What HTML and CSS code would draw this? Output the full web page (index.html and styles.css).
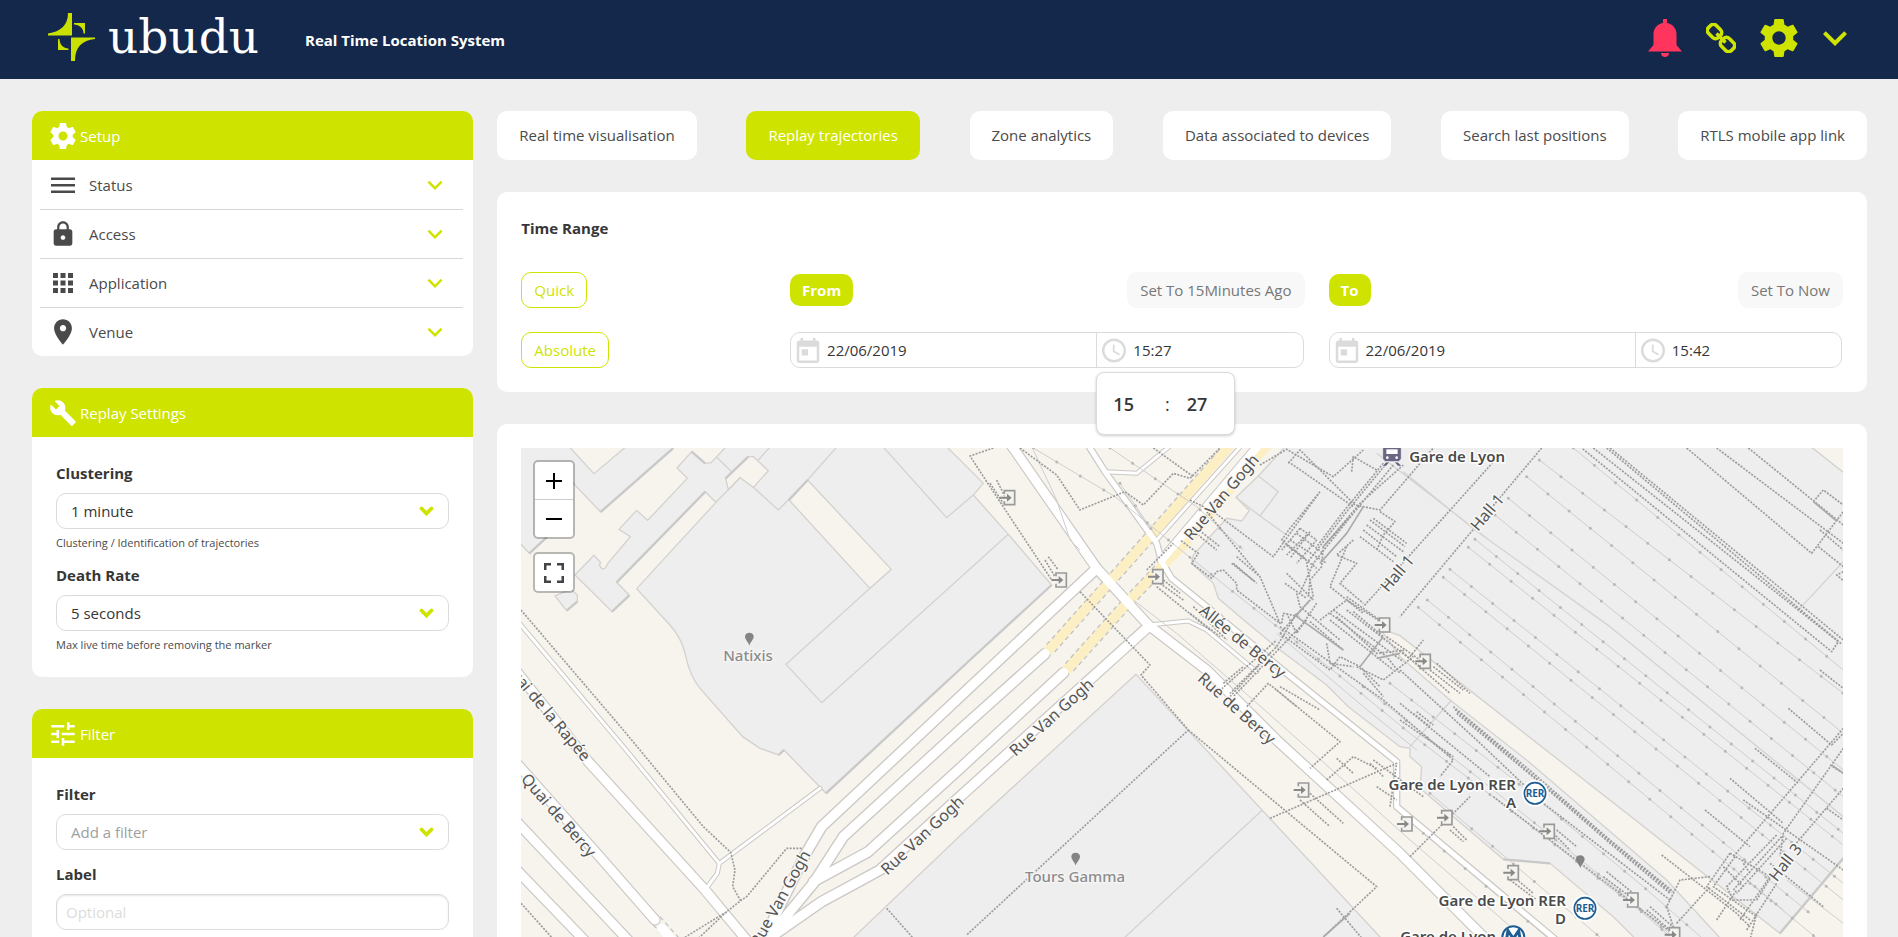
FILE: index.html
```html
<!DOCTYPE html>
<html lang="en">
<head>
<meta charset="utf-8">
<title>Ubudu - Real Time Location System</title>
<link rel="stylesheet" href="styles.css">
</head>
<body>
<svg class="defs" aria-hidden="true">
  <symbol id="i-gear" viewBox="2 2 20 20"><path d="M19.43 12.98c.04-.32.07-.64.07-.98s-.03-.66-.07-.98l2.11-1.65c.19-.15.24-.42.12-.64l-2-3.46c-.12-.22-.39-.3-.61-.22l-2.49 1c-.52-.4-1.08-.73-1.69-.98l-.38-2.65C14.46 2.18 14.25 2 14 2h-4c-.25 0-.46.18-.49.42l-.38 2.65c-.61.25-1.17.59-1.69.98l-2.49-1c-.23-.09-.49 0-.61.22l-2 3.46c-.13.22-.07.49.12.64l2.11 1.65c-.04.32-.07.65-.07.98s.03.66.07.98l-2.11 1.65c-.19.15-.24.42-.12.64l2 3.46c.12.22.39.3.61.22l2.49-1c.52.4 1.08.73 1.69.98l.38 2.65c.03.24.24.42.49.42h4c.25 0 .46-.18.49-.42l.38-2.65c.61-.25 1.17-.59 1.69-.98l2.49 1c.23.09.49 0 .61-.22l2-3.46c.12-.22.07-.49-.12-.64l-2.11-1.65zM12 15.500c-1.930 0-3.500-1.570-3.500-3.500s1.570-3.500 3.500-3.500 3.500 1.570 3.500 3.500-1.570 3.500-3.500 3.500z"/></symbol>
  <symbol id="i-chev" viewBox="6 8 12 8"><path d="M7.410 8.590 12 13.170l4.590-4.580L18 10l-6 6-6-6z"/></symbol>
  <symbol id="i-cal" viewBox="3 1 18 20"><path d="M19 3h-1V1h-2v2H8V1H6v2H5c-1.110 0-1.990.9-1.990 2L3 19c0 1.100.89 2 2 2h14c1.100 0 2-.9 2-2V5c0-1.100-.9-2-2-2zm0 16H5V8h14v11zM7 10h5v5H7z"/></symbol>
  <symbol id="i-clock" viewBox="2 2 20 20"><path d="M12 2a10 10 0 1 0 0 20 10 10 0 0 0 0-20zm0 18a8 8 0 1 1 0-16 8 8 0 0 1 0 16zm.5-13H11v6l5.200 3.200.8-1.300-4.500-2.700z"/></symbol>
  <symbol id="m-door" viewBox="-28 -26 56 52" overflow="visible"><path d="M-12-11V-21H19V21H-12V11" fill="#f4f2ee" stroke="#999" stroke-width="5"/><path d="M-26-3H-4V-12L10 0-4 12V3H-26z" fill="#888"/></symbol>
  <symbol id="m-pin" viewBox="-14 -20 28 40" overflow="visible"><path d="M0 20C-3 8-13 2-13-7A13 12 0 0 1 13-7C13 2 3 8 0 20z" fill="#848484"/></symbol>
</svg>
<div class="app">
  <header class="topbar">
    <a class="brand" href="#">
      <svg class="brand-mark" viewBox="0 0 48 48"><g fill="#c9e000"><path d="M20 0H24V22.500H0V20.500C13 18.500 20 12 20 0z"/><path d="M24 24.500H47V26C34 27.500 27 34 27 48H23V24.500z"/><path d="M26 10H37V20.500H35.500C35.500 15 31 11.500 26 11.500z"/><path d="M10 26H11.500C12 32.500 15.500 35 20.500 35.500V37H10z"/></g></svg>
      <span class="brand-name">ubudu</span>
    </a>
    <h1 class="title">Real Time Location System</h1>
    <nav class="actions">
      <button class="act" aria-label="Alerts"><svg class="bell" viewBox="0 0 34 38"><path fill="#ff355e" d="M15 1a2 2 0 0 1 4 0v3c6 1.200 9.500 5.500 9.500 11v11L34 32.500H0L5.500 26V15C5.500 9.500 9 5.200 15 4zM13 34h8c0 2.500-1.700 4-4 4s-4-1.500-4-4z"/></svg></button>
      <button class="act" aria-label="Links"><svg class="chain" viewBox="0 0 30 30"><g fill="none" stroke="#cfe300" stroke-width="3.600"><rect x="-7" y="-5.500" width="14" height="11" rx="4" transform="translate(8.500 8.500) rotate(45)"/><rect x="-7" y="-5.500" width="14" height="11" rx="4" transform="translate(21.500 21.500) rotate(45)"/><path d="M10.500 10.500l9 9"/></g></svg></button>
      <button class="act" aria-label="Settings"><svg class="cog"><use href="#i-gear"/></svg></button>
      <button class="act" aria-label="More"><svg class="more"><use href="#i-chev"/></svg></button>
    </nav>
  </header>
  <div class="layout">
    <aside class="side">
      <section class="panel">
        <h2 class="panel-head"><svg class="hico"><use href="#i-gear"/></svg>Setup</h2>
        <ul class="menu">
          <li><button class="item"><svg class="mico" viewBox="0 0 24 24"><path d="M0 4.500h24v2.500H0zM0 11h24v2.500H0zM0 17.500h24V20H0z"/></svg><span>Status</span><svg class="chev"><use href="#i-chev"/></svg></button></li>
          <li><button class="item"><svg class="mico tall" viewBox="2 0 20 24"><path d="M18 8h-1V6c0-2.760-2.240-5-5-5S7 3.240 7 6v2H6c-1.100 0-2 .9-2 2v10c0 1.100.9 2 2 2h12c1.100 0 2-.9 2-2V10c0-1.100-.9-2-2-2zm-6 9c-1.100 0-2-.9-2-2s.9-2 2-2 2 .9 2 2-.9 2-2 2zm3.100-9H8.900V6c0-1.710 1.390-3.100 3.100-3.100s3.100 1.390 3.100 3.100v2z"/></svg><span>Access</span><svg class="chev"><use href="#i-chev"/></svg></button></li>
          <li><button class="item"><svg class="mico" viewBox="0 0 24 24"><path d="M2 2h5v5H2zm7.500 0h5v5h-5zM17 2h5v5h-5zM2 9.500h5v5H2zm7.500 0h5v5h-5zm7.500 0h5v5h-5zM2 17h5v5H2zm7.500 0h5v5h-5zm7.500 0h5v5h-5z"/></svg><span>Application</span><svg class="chev"><use href="#i-chev"/></svg></button></li>
          <li><button class="item"><svg class="mico tall" viewBox="3 1 18 22"><path d="M12 2C8.130 2 5 5.130 5 9c0 5.250 7 13 7 13s7-7.750 7-13c0-3.870-3.130-7-7-7zm0 9.500c-1.380 0-2.500-1.120-2.500-2.500s1.120-2.500 2.500-2.500 2.500 1.120 2.500 2.500-1.120 2.500-2.500 2.500z"/></svg><span>Venue</span><svg class="chev"><use href="#i-chev"/></svg></button></li>
        </ul>
      </section>
      <section class="panel">
        <h2 class="panel-head"><svg class="hico wide" viewBox="0 0 24 24"><path d="M22.700 19l-9.100-9.100c.9-2.300.4-5-1.500-6.900-2-2-5-2.400-7.400-1.300L9 6 6 9 1.600 4.700C.4 7.100.9 10.100 2.900 12.100c1.900 1.900 4.600 2.400 6.900 1.500l9.100 9.100c.4.4 1 .4 1.400 0l2.300-2.300c.5-.4.5-1.100.1-1.400z"/></svg>Replay Settings</h2>
        <div class="fields">
          <div class="field"><label for="clustering">Clustering</label>
            <div class="select"><select id="clustering"><option>1 minute</option></select><svg viewBox="0 0 12 8"><path d="M2 2l4 4 4-4"/></svg></div>
            <p class="help">Clustering / Identification of trajectories</p></div>
          <div class="field"><label for="death">Death Rate</label>
            <div class="select"><select id="death"><option>5 seconds</option></select><svg viewBox="0 0 12 8"><path d="M2 2l4 4 4-4"/></svg></div>
            <p class="help">Max live time before removing the marker</p></div>
        </div>
      </section>
      <section class="panel">
        <h2 class="panel-head"><svg class="hico" viewBox="2 2 20 20"><path d="M3 17v2h6v-2H3zM3 5v2h10V5H3zm10 16v-2h8v-2h-8v-2h-2v6h2zM7 9v2H3v2h4v2h2V9H7zm14 4v-2H11v2h10zm-6-4h2V7h4V5h-4V3h-2v6z"/></svg>Filter</h2>
        <div class="fields">
          <div class="field"><label for="filter">Filter</label>
            <div class="select empty"><select id="filter"><option>Add a filter</option></select><svg viewBox="0 0 12 8"><path d="M2 2l4 4 4-4"/></svg></div></div>
          <div class="field"><label for="label">Label</label>
            <input class="text" id="label" type="text" placeholder="Optional"></div>
        </div>
      </section>
    </aside>
    <main class="main">
      <nav class="tabs">
        <a class="tab" href="#">Real time visualisation</a>
        <a class="tab active" href="#">Replay trajectories</a>
        <a class="tab" href="#">Zone analytics</a>
        <a class="tab" href="#">Data associated to devices</a>
        <a class="tab" href="#">Search last positions</a>
        <a class="tab" href="#">RTLS mobile app link</a>
      </nav>
      <section class="card range">
        <h2 class="card-title">Time Range</h2>
        <div class="range-grid">
          <div><button class="btn outline">Quick</button></div>
          <div class="split"><span class="badge">From</span><button class="btn soft">Set To 15Minutes Ago</button></div>
          <div class="split"><span class="badge">To</span><button class="btn soft">Set To Now</button></div>
          <div><button class="btn outline">Absolute</button></div>
          <div class="stamp">
            <div class="part date"><svg><use href="#i-cal"/></svg><input type="text" aria-label="From date" value="22/06/2019"></div>
            <div class="part time"><svg><use href="#i-clock"/></svg><input type="text" aria-label="From time" value="15:27">
              <div class="picker"><span class="num">15</span><span>:</span><span class="num">27</span></div></div>
          </div>
          <div class="stamp">
            <div class="part date"><svg><use href="#i-cal"/></svg><input type="text" aria-label="To date" value="22/06/2019"></div>
            <div class="part time"><svg><use href="#i-clock"/></svg><input type="text" aria-label="To time" value="15:42"></div>
          </div>
        </div>
      </section>
      <section class="card map-card">
        <div class="map">
<svg class="map-art" viewBox="0 0 1322 520" preserveAspectRatio="xMinYMin slice">
<g transform="translate(-11 -8) scale(.33333)">
  <g class="bld">
    <path d="M20 10H168L252 101 360 10H505L272 216 190 130 130 190 150 255 58 340 20 300z"/>
    <path d="M545 35L501 84 532 115 413 241 380 211 327 268 361 290 293 371Q280 400 268 375L272 368 252 346 195 405 306 515 358 466 320 427 586 155 618 187 380 446 480 555Q515 595 525 640 540 710 570 745L698 890 750 925 806 945 822 930 948 1060 1350 688 1625 435 1495 283 1390 165 1420 130 1300 10H658L603 68 585 70z"/>
    <path d="M165 455L135 468 170 512 202 485 202 465 185 450z"/>
    <path d="M1878 703L1350 1187 960 1560H2670L2610 1491z"/>
    <path d="M2335 10L2245 108 2178 172 2218 212 2195 243 2150 235 2050 345 2045 370 2110 430 2125 475 2195 535 2310 630 2450 735 2515 800 2670 920 2700 925 2700 950 2735 980 2730 1045 2980 1258 3120 1270 3310 1430 3450 1570H4010V105L3890 10z"/>
  </g>
  <g class="land">
    <path d="M647 115L715 50 730 50 775 92 730 142 690 113 655 150z"/>
    <path d="M893 120L837 180 1080 445 1144 388z"/>
    <path d="M2610 565L2670 587 3810 1480 4010 1240V1570H3700L3470 1320 3050 960 2820 780 2670 650z"/>
  </g>
  <g class="edge"><path d="M1110 10L1310 233 1390 165M730 142L805 210 893 120 990 10M618 187L690 113M620 52L665 95M745 60L790 10M1080 445L828 673 935 788 1495 283M2255 1112L1760 1570M2245 108L2305 155 2250 228 2178 172M2250 228L2330 285M2680 95L2895 270 3300 560 4000 1130M3870 505L4000 365M2825 780L2700 920M2600 40L2950 310"/></g>
  <g class="shade"><path d="M490 24L272 216M110 292L58 340M586 155L320 427M358 466L306 515M1380 660L948 1060M1625 435L1380 660M893 120L837 180M647 115L715 50M202 485L170 512M806 945L822 930M2980 1258L3120 1270M4000 1255L3810 1480M545 35L585 70"/></g>
  <g class="case">
    <path d="M1500 10L1760 385 1915 555 2090 690 2300 900 2670 1240 2990 1560" stroke-width="34"/>
    <path d="M1760 385L1350 770 935 1160 885 1245 730 1560M1605 641L1350 870 1000 1190 910 1330 720 1560M1661 698L1350 985 1075 1235 910 1325M1915 560L1350 1070 1110 1290 935 1385 770 1500" stroke-width="36"/>
    <path d="M1955 360L2250 10" stroke-width="30"/><path d="M1740 24L1785 95 1940 310 1955 365 1985 415 2090 500 2330 700 2660 965V1100L3150 1510" stroke-width="22"/>
    <path d="M1785 95L1880 100 1990 10M1940 300L2200 10M1915 555L2035 543 2090 570 2240 695M20 540L340 920 628 1270 622 1300 585 1350M628 1270L930 1045" stroke-width="15"/>
    <path d="M20 695L235 965 585 1350 760 1560M20 970L260 1240 435 1440M20 1145L420 1570M20 1290L290 1570" stroke-width="34"/>
  </g>
  <g class="tunnel"><path d="M1612 635L1920 290 2165 10M1668 692L1850 490 1950 385 2030 305 2275 10"/></g>
  <g class="tdash"><path d="M1610 614L1908 279 2153 0M1634 636L1932 301M1666 671L1838 479 1938 374M1690 693L1862 501 1962 396M450 1430L530 1520M430 1455L500 1530"/></g>
  <g class="road">
    <path d="M1500 10L1760 385 1915 555 2090 690 2300 900 2670 1240 2990 1560" stroke-width="27"/>
    <path d="M1760 385L1350 770 935 1160 885 1245 730 1560M1605 641L1350 870 1000 1190 910 1330 720 1560M1661 698L1350 985 1075 1235 910 1325M1915 560L1350 1070 1110 1290 935 1385 770 1500" stroke-width="28"/>
    <path d="M1955 360L2250 10" stroke-width="24"/><path d="M1740 24L1785 95 1940 310 1955 365 1985 415 2090 500 2330 700 2660 965V1100L3150 1510" stroke-width="15"/>
    <path d="M1785 95L1880 100 1990 10M1940 300L2200 10M1915 555L2035 543 2090 570 2240 695M20 540L340 920 628 1270 622 1300 585 1350M628 1270L930 1045" stroke-width="9"/>
    <path d="M20 695L235 965 585 1350 760 1560M20 970L260 1240 435 1440M20 1145L420 1570M20 1290L290 1570M455 1465L540 1560" stroke-width="27"/>
  </g>
  <g class="rail">
    <path d="M3088 60L4000 760M3050 110L4000 880M2995 175L4000 990M2955 225L4000 1070M2895 298L4000 1180M2875 322L4000 1215M2820 388L4000 1330M2800 412L4000 1380M2752 480L3900 1420M2725 502L3820 1410M3190 24L4000 690"/>
    <path d="M1570 24L1815 170 2000 320 2200 480 2480 700 2700 880 3000 1110 3400 1420 3560 1560M1800 24L2060 200 2200 330M1570 30L1640 180 1680 300 1710 330M1830 130L1940 290M1870 480L2000 580 2230 780 2500 1020 2700 1200 3060 1510"/>
    <path d="M2560 740L2900 1010 3300 1330 3500 1500M2640 730L3000 1010 3400 1340 3640 1550M2300 580L2560 800 2720 930M2740 1180L3120 1500M2760 1060L3280 1500M3720 1330L4000 1560M3830 1320L4000 1450"/>
  </g>
  <g class="dots-rail">
    <path d="M3088 60L4000 760M3050 110L4000 880M2995 175L4000 990M2955 225L4000 1070M2895 298L4000 1180M2875 322L4000 1215M2820 388L4000 1330M2800 412L4000 1380M2752 480L3900 1420M2725 502L3820 1410M3190 24L4000 690"/>
    <path d="M1570 24L1815 170 2000 320 2200 480 2480 700 2700 880 3000 1110 3400 1420 3560 1560M1800 24L2060 200 2200 330M1830 130L1940 290M2560 740L2900 1010 3300 1330 3500 1500M2640 730L3000 1010 3400 1340 3640 1550M2740 1180L3120 1500M2760 1060L3280 1500M3720 1330L4000 1560"/>
  </g>
  <g class="foot">
    <path d="M20 495L340 870 580 1160 662 1237 675 1290 668 1340 692 1382 650 1415 520 1495M875 1225H830L710 1370 692 1382M20 1375L150 1520M650 1415L560 1500M1130 1405L1250 1540M2480 1405L2560 1500"/>
    <path d="M1530 24L1640 105 1710 210 1845 155 1900 195 1990 100 2040 115 2130 24M1450 24L1380 48 1440 140 1625 420M1460 120L1490 180M1440 130L1480 190M1615 350L1645 390M1605 360L1635 410M1710 455L1920 675 1893 705 2035 870 1370 1485M2035 870L2600 1340 2440 1491M1930 24L2050 110"/>
    <path d="M1910 390L1990 310M1940 440L2100 570M1950 430L2020 480M1960 420L2010 460M2050 500L2150 600M2040 520L2130 590M2120 760L2300 600M2140 730L2200 680M2160 770L2280 640M2210 800L2275 730 2490 905 2400 985M2310 740L2430 810M2300 750L2360 800"/>
    <g transform="translate(1770 0)">
      <path d="M480 75L560 28 700 110 790 30M565 70L600 30 765 195 840 210 1000 24M565 65L760 200M755 95L760 50 830 90M840 215L885 245 850 285 830 330M660 155L570 265 545 300 620 360M340 215L520 350 660 155M320 215L480 410 540 550 410 450V430L370 390 350 395 335 415 275 370 295 340 240 300M270 265L350 330M290 265L360 320M400 370L470 430M410 350L480 410M395 370L465 425M270 180L340 215 300 240"/>
      <path d="M860 70L740 215 620 370 640 470 540 580M880 75L760 220 640 370 600 460M910 75L780 190 670 320M850 70L730 215 650 320M750 230L670 320 665 380 630 420 625 470M760 300L710 345 770 370 720 430 790 490M740 320L690 440 790 520M810 240L915 320M800 255L910 335M790 270L890 350M780 290L880 365M820 235L920 310"/>
      <path d="M570 300L680 370M560 315L650 385M590 280L670 340M600 265L650 300M600 265L545 330M630 275L570 355M650 300L590 370M620 285L560 345M560 400L640 480M555 430L620 475M660 540L740 480 850 550M560 520L590 580 650 490M540 580L690 690 720 650 780 680 840 740M590 460L600 500 720 600M545 550L550 520 600 530"/>
      <path d="M690 520L860 650 900 700M700 510L910 665M710 530L830 640 920 630M740 510L960 680M630 545L730 630M680 610L690 670 760 680M590 520L530 620 390 760M620 540L400 770M770 680L850 720 940 650M740 470L860 555M690 540L880 690M760 515L850 590 M860 590L960 660"/>
    </g>
    <path d="M2310 560L2620 780 2830 960 2790 1010M2560 700L2620 770M2450 1020L2530 950 2600 985M2480 955L2530 1000M2280 1135L2660 970 2640 1100M2400 1060L2500 1150M2370 1080L2460 1160M2580 970L2620 1010M2600 1040L2660 1080M2590 960L2740 1070"/>
    <path d="M2760 690L2850 760M2770 680L2860 750M2780 670L2880 760M2670 630L2820 760M2700 650L2740 600M2670 790L2940 1010M2670 840L2830 950M2710 820L2760 860M2720 815L2770 855M2670 690L2900 900 3100 1090 3480 1380"/>
    <path d="M2830 800L3070 1000 3300 1200 3490 1355M2840 820L3080 1020 3300 1210 3480 1360M2835 808L3300 1204 3485 1357M2830 1160L2870 1200M2820 1170L2860 1205M3000 1320L3080 1380M3010 1310L3070 1360M3140 1170L3200 1220M3130 1180L3180 1230M2700 1250L2880 1070M2950 1070L3500 1490M3280 1310L3360 1370M3290 1295L3370 1360M3410 1410L3480 1470M3420 1400L3500 1470M3500 1450L3600 1340"/>
    <path d="M3095 24L2670 530M2955 60L2700 345 2560 500"/>
    <path d="M3300 24L4000 600M3250 24L3985 605 3965 635 3215 24M3290 24L3995 612M3530 24L3905 340 4000 215M3620 24L4000 310M3715 24L4000 255M3910 185L3940 150 4000 195M3925 320L4000 380M3930 270L4000 330M4000 395L3980 405 4010 430"/>
    <path d="M4000 865L3670 1250M4000 925L3820 1180 3810 1250M4000 1045L3850 1220M3930 690L4000 745M3835 805L3965 915 4000 880M3735 925L3865 1030M3660 1015L3820 1150M3585 1110L3720 1220M3455 1245L3680 1420 3720 1460M3960 975L4000 1000M3950 1105L4000 1140M3700 1080L4000 1290"/>
    <path d="M3800 1185L3650 1340 3670 1380 3740 1380M3815 1190L3670 1350M3830 1195L3680 1360M3660 1240L3590 1340 3720 1440M3675 1250L3610 1340 3740 1430M3660 1240L3780 1310 3690 1440M3640 1280L3700 1340M3740 1380L3790 1300M3710 1470L3800 1330M3780 1270L3940 1400M3620 1440L3680 1350M3600 1310L3510 1320 3470 1400 3490 1460M3740 1420L3720 1500M3700 1270L3720 1300"/>
  </g>
  <g class="path"><path d="M2550 680L2620 590M2355 530L2400 480M2430 370L2510 280 2560 200M2440 1491L2520 1420M2360 530L2500 630M2600 655L2670 640M3910 185L3980 243M3965 975L4000 1000"/></g>
  <g>
    <use href="#m-door" x="1467" y="147" width="56" height="52"/><use href="#m-door" x="1622" y="394" width="56" height="52"/><use href="#m-door" x="1912" y="384" width="56" height="52"/><use href="#m-door" x="2592" y="529" width="56" height="52"/><use href="#m-door" x="2349" y="1024" width="56" height="52"/><use href="#m-door" x="2659" y="1126" width="56" height="52"/><use href="#m-door" x="2714" y="638" width="56" height="52"/><use href="#m-door" x="2779" y="1107" width="56" height="52"/><use href="#m-door" x="3086" y="1148" width="56" height="52"/><use href="#m-door" x="2978" y="1272" width="56" height="52"/><use href="#m-door" x="3337" y="1354" width="56" height="52"/><use href="#m-door" x="3462" y="1458" width="56" height="52"/>
    <use href="#m-pin" x="704" y="577" width="28" height="40"/><use href="#m-pin" x="1683" y="1237" width="28" height="40"/><use href="#m-pin" x="3197" y="1245" width="28" height="40"/>
    <path d="M2618 15h56v42l-8 8h-40l-8-8zM2628 66h12l-12 13h-12zM2652 66h12l12 13h-12z" fill="#6a6782" stroke="#fff" stroke-width="2"/><path d="M2629 28h34v14h-34z" fill="#fff"/><circle cx="2632" cy="53" r="4" fill="#fff"/><circle cx="2660" cy="53" r="4" fill="#fff"/>
    <g fill="#fff" stroke="#fff" stroke-width="6"><circle cx="3075" cy="1060" r="37"/><circle cx="3225" cy="1405" r="37"/></g>
    <g fill="#fff" stroke="#1d5d93" stroke-width="5"><circle cx="3075" cy="1060" r="32"/><circle cx="3225" cy="1405" r="32"/></g>
    <circle cx="3010" cy="1492" r="33" fill="#fff" stroke="#1d5d93" stroke-width="6"/><path d="M2986 1520L2994 1472 3010 1496 3026 1472 3034 1520" fill="none" stroke="#1d5d93" stroke-width="9"/>
  </g>
</g>
<g class="rer"><text x="1014" y="349">RER</text><text x="1064" y="464">RER</text></g>
<g class="street">
  <text transform="translate(401 387) rotate(-43)">Rue Van Gogh</text>
  <text transform="translate(259 450) rotate(-61)">Rue Van Gogh</text>
  <text transform="translate(530 269) rotate(-42)">Rue Van Gogh</text>
  <text transform="translate(700 49) rotate(-50)">Rue Van Gogh</text>
  <text transform="translate(722 193) rotate(39)">Allée de Bercy</text>
  <text transform="translate(716 260) rotate(42)">Rue de Bercy</text>
  <text transform="translate(876 125) rotate(-50)">Hall 1</text>
  <text transform="translate(966 64) rotate(-50)">Hall 1</text>
  <text transform="translate(1264 414) rotate(-52)">Hall 3</text>
  <text transform="translate(26 262) rotate(50)">Quai de la Rapée</text>
  <text transform="translate(38 367) rotate(49)">Quai de Bercy</text>
</g>
<g class="place"><text x="227" y="213">Natixis</text><text x="554" y="434">Tours Gamma</text></g>
<g class="station"><text x="984" y="14">Gare de Lyon</text><text x="995" y="342">Gare de Lyon RER</text><text x="995" y="360">A</text><text x="1045" y="458">Gare de Lyon RER</text><text x="1045" y="476">D</text><text x="975" y="494">Gare de Lyon</text></g>
</svg>
          <div class="controls">
            <div class="ctl"><button aria-label="Zoom in"><svg viewBox="0 0 16 16"><path d="M8 0v16M0 8h16"/></svg></button><button aria-label="Zoom out"><svg viewBox="0 0 16 16"><path d="M0 8h16"/></svg></button></div>
            <div class="ctl"><button aria-label="Full screen"><svg class="full" viewBox="0 0 20 20"><path d="M1 7V1h6M13 1h6v6M19 13v6h-6M7 19H1v-6"/></svg></button></div>
          </div>
        </div>
      </section>
    </main>
  </div>
</div>
</body>
</html>
```
FILE: styles.css
```css
* { box-sizing: border-box; }
body { margin: 0; background: #eee; color: #4a4a4a; font: 15px/24px "Open Sans", "Noto Sans", sans-serif; }
h1, h2, p, ul { margin: 0; padding: 0; font-size: inherit; }
ul { list-style: none; }
button, input, select { font: inherit; color: inherit; margin: 0; }
button { cursor: pointer; border: 0; background: none; padding: 0; }
a { color: inherit; text-decoration: none; }
.defs { position: absolute; width: 0; height: 0; }
.app { height: 100vh; overflow: hidden; }

.topbar { display: flex; align-items: center; height: 79px; padding: 0 50px 0 48px; background: #14284b; color: #fff; }
.brand { display: flex; align-items: center; gap: 12px; padding-bottom: 5px; }
.brand-mark { width: 48px; height: 48px; }
.brand-name { font: 47px/48px "DejaVu Serif", serif; }
.title { margin-left: 46px; font-weight: 700; line-height: 24px; }
.actions { display: flex; align-items: center; gap: 24px; margin-left: auto; padding-bottom: 4px; }
.act { display: flex; }
.bell { width: 34px; height: 38px; }
.chain { width: 30px; height: 30px; }
.cog { width: 38px; height: 38px; fill: #cfe300; }
.more { width: 26px; height: 16px; fill: #cfe300; }

.layout { display: grid; grid-template-columns: 29fr 90fr; gap: 24px; padding: 32px 31px 32px 32px; }
.side, .main { display: flex; flex-direction: column; gap: 32px; min-width: 0; }
.panel, .card { background: #fff; border-radius: 10px; }
.panel-head { display: flex; align-items: center; gap: 4px; height: 49px; padding: 0 18px; border-radius: 10px 10px 0 0; background: #cfe300; color: #fff; font-weight: 400; }
.hico { width: 26px; height: 26px; fill: #fff; }
.hico.wide { width: 28px; height: 28px; margin: 0 -1px; }
.menu { padding: 0 10px 0 8px; }
.menu li + li { border-top: 1px solid #d2d8d8; }
.item { display: flex; align-items: center; width: 100%; height: 48px; padding: 0 20px 0 11px; gap: 14px; text-align: left; }
.menu li:first-child .item { height: 49px; }
.mico { width: 24px; height: 24px; fill: #4a4a4a; }
.mico.tall { height: 28px; }
.chev { width: 16px; height: 10px; margin-left: auto; fill: #cfe300; }

.fields { display: flex; flex-direction: column; gap: 12px; padding: 24px; }
.field { display: flex; flex-direction: column; }
.field label { margin-bottom: 8px; color: #363636; font-weight: 700; }
.help { padding-top: 6px; font-size: 11px; line-height: 16px; }
.select { display: grid; align-items: center; }
.select select { grid-area: 1 / 1; width: 100%; height: 36px; padding: 0 14px; border: 1px solid #dbdbdb; border-radius: 10px; background: #fff; color: #363636; appearance: none; }
.select.empty select { color: #a0a0a0; }
.select svg { grid-area: 1 / 1; justify-self: end; width: 15px; height: 10px; margin-right: 15px; fill: none; stroke: #cfe300; stroke-width: 3; stroke-linecap: round; pointer-events: none; }
.text { height: 36px; padding: 0 9px; border: 1px solid #dbdbdb; border-radius: 10px; box-shadow: inset 0 1px 2px rgba(10, 10, 10, .1); }
.text::placeholder { color: #dcdcdc; opacity: 1; }

.tabs { display: flex; justify-content: space-between; }
.tab { padding: 12px 22px 13px; border-radius: 10px; background: #fff; }
.tab.active { background: #cfe300; color: #fff; }
.card { padding: 24px; }
.card-title { color: #363636; font-weight: 700; }
.range-grid { display: grid; grid-template-columns: 49fr 103fr 103fr; gap: 24px; margin-top: 32px; }
.split { display: flex; align-items: center; justify-content: space-between; }
.badge { padding: 4px 12px; border-radius: 10px; background: #cfe300; color: #fff; font-weight: 700; }
.btn { height: 36px; padding: 0 12px; border: 1px solid transparent; border-radius: 10px; }
.outline { border-color: #cfe300; color: #cfe300; }
.soft { background: #f8f8f8; color: #777; }
.stamp { display: flex; height: 36px; margin-right: 1px; border: 1px solid #dbdbdb; border-radius: 10px; }
.part { position: relative; display: flex; align-items: center; min-width: 0; gap: 7px; padding-left: 5px; }
.part svg { flex: none; width: 24px; height: 25px; fill: #dbdbdb; }
.part input { flex: 1; min-width: 0; width: 0; padding: 0; border: 0; background: none; color: #363636; outline: 0; }
.date { flex: 3; }
.time { flex: 2; border-left: 1px solid #dbdbdb; }
.picker { position: absolute; top: 39px; left: -1px; z-index: 2; display: flex; justify-content: space-between; align-items: center; width: 139px; height: 63px; padding: 0 27px 0 16px; border: 1px solid #dbdbdb; border-radius: 8px; background: #fff; box-shadow: 0 1px 3px rgba(0, 0, 0, .2); color: #363636; font-size: 18px; }
.num { font-weight: 600; }
.num:first-child { margin-right: 14px; }

.map { position: relative; overflow: hidden; height: 520px; background: #f7f4ee; }
.map-art { display: block; width: 100%; height: 100%; }
.controls { position: absolute; top: 12px; left: 12px; display: flex; flex-direction: column; gap: 13px; }
.ctl { display: flex; flex-direction: column; border: 2px solid rgba(0, 0, 0, .25); border-radius: 5px; background: #fff; background-clip: padding-box; }
.ctl button { display: flex; align-items: center; justify-content: center; width: 38px; height: 37px; }
.ctl button + button { height: 38px; border-top: 1px solid #ccc; }
.ctl svg { width: 16px; height: 16px; fill: none; stroke: #000; stroke-width: 2; }
.ctl .full { width: 20px; height: 20px; stroke: #444; stroke-width: 3; }

.bld path { fill: #eee; stroke: #d4d2d0; stroke-width: 4; }
.land path { fill: #f7f4ee; stroke: #d4d2d0; stroke-width: 4; }
.edge, .shade, .case, .road, .tunnel, .tdash, .rail, .dots-rail, .foot, .path { fill: none; stroke-linejoin: round; }
.edge { stroke: #d5d3d1; stroke-width: 4; }
.shade { stroke: #c9c9c9; stroke-width: 7; }
.case { stroke: #cbc8c5; stroke-linecap: round; }
.road { stroke: #fff; stroke-linecap: round; }
.tunnel { stroke: #fcefc3; stroke-width: 30; }
.tdash { stroke: #c4c4c4; stroke-width: 4; stroke-dasharray: 14 10; }
.rail { stroke: #cecece; stroke-width: 3; }
.dots-rail { stroke: #b8b8b8; stroke-width: 9; stroke-linecap: round; stroke-dasharray: 0 82; }
.foot { stroke: #9c9c9c; stroke-width: 5; stroke-dasharray: 6 4; }
.path { stroke: #aaa; stroke-width: 5; }
.map text { font-family: "Noto Sans", sans-serif; font-size: 15px; paint-order: stroke; stroke: #fff; stroke-width: 3px; stroke-linejoin: round; }
.map .street text { fill: #555; font-size: 16px; text-anchor: middle; dominant-baseline: central; stroke: #f9f8f5; }
.map .place text { fill: #8c8c8c; font-weight: 500; text-anchor: middle; stroke: #f4f4f4; }
.map .station text { fill: #4a4a4a; font-weight: 600; text-anchor: end; }
.map .rer text { fill: #1d5d93; font-size: 10px; font-weight: 700; text-anchor: middle; stroke-width: 0; }
```
